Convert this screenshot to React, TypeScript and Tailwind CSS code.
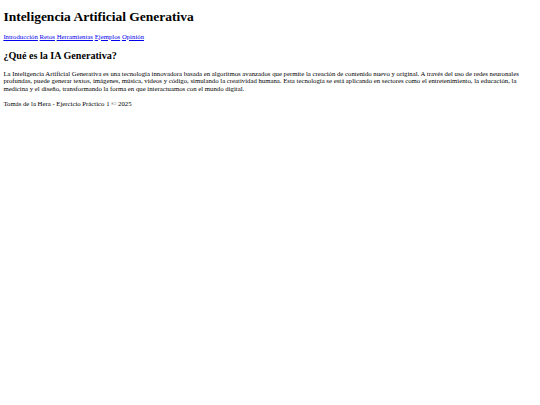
const links = ["Introducción", "Retos", "Herramientas", "Ejemplos", "Opinión"];

export default function App() {
  return (
    <div className="min-h-screen bg-white px-[3.375px] pt-px text-black font-['Liberation_Serif','Times_New_Roman',serif] text-[6.75px] leading-[7.8px]">
      <header>
        <h1 className="mt-[8.4px] mb-[7.8px] text-[13.5px] font-bold leading-[15.5px]">
          Inteligencia Artificial Generativa
        </h1>
        <nav>
          {links.map((l, i) => (
            <span key={l}>
              <a href="#" className="text-[#0000ee] underline">
                {l}
              </a>
              {i < links.length - 1 ? " " : ""}
            </span>
          ))}
        </nav>
      </header>

      <main>
        <section>
          <h2 className="mt-[9.2px] mb-[8.4px] text-[10.125px] font-bold leading-[11.6px]">¿Qué es la IA Generativa?</h2>
          <p className="my-[6.75px]">
            La Inteligencia Artificial Generativa es una tecnología innovadora basada en algoritmos avanzados que
            permite la creación de contenido nuevo y original. A través del uso de redes neuronales profundas, puede
            generar textos, imágenes, música, videos y código, simulando la creatividad humana. Esta tecnología se
            está aplicando en sectores como el entretenimiento, la educación, la medicina y el diseño, transformando
            la forma en que interactuamos con el mundo digital.
          </p>
        </section>
      </main>

      <footer>
        <p className="my-[6.75px]">Tomás de la Hera - Ejercicio Práctico 1 © 2025</p>
      </footer>
    </div>
  );
}
